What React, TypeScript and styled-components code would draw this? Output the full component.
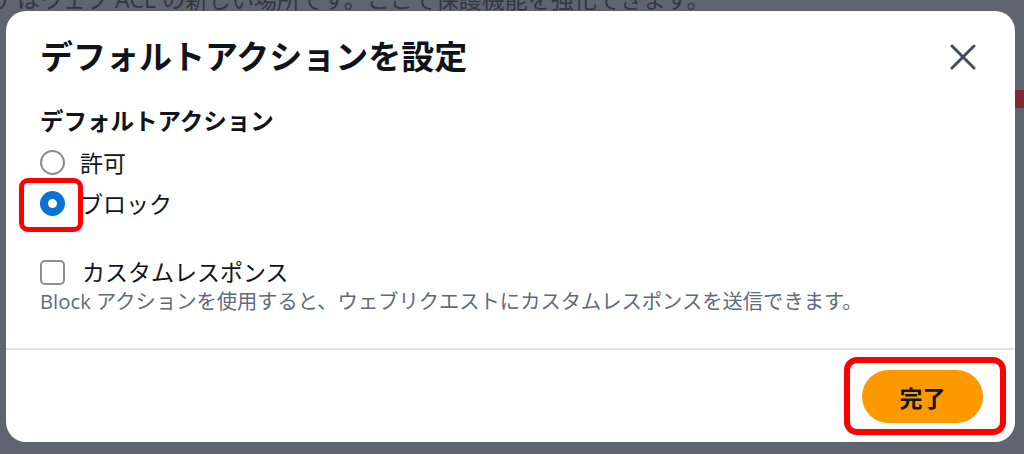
import React from 'react';
import styled, {createGlobalStyle} from "styled-components";

const GlobalStyle = createGlobalStyle`
html, body {
margin: 0;
padding: 0;
width: 1024px;
height: 454px;
overflow: hidden;
background: #5f6570;
font-family: "Open Sans", "Noto Sans CJK JP", sans-serif;
}
`;

export default function App() {
    return (
        <>
            <GlobalStyle/>
            <Page>
                <BackgroundText>アはウェブ ACL の新しい場所です。ここで保護機能を強化できます。</BackgroundText>
                <BackgroundTable>
                    <TableColumn/>
                    <TableColumn/>
                    <TableColumn/>
                    <TableColumn highlighted/>
                </BackgroundTable>
                <Modal role="dialog" aria-label="デフォルトアクションを設定">
                    <Header>
                        <Title>デフォルトアクションを設定</Title>
                        <CloseButton aria-label="閉じる">
                            <svg width="26" height="26" viewBox="0 0 26 26" fill="none">
                                <path d="M2 2 L24 24 M24 2 L2 24" stroke="#414d5c" strokeWidth="3" strokeLinecap="round"/>
                            </svg>
                        </CloseButton>
                    </Header>
                    <Body>
                        <FieldLabel>デフォルトアクション</FieldLabel>
                        <RadioGroup>
                            <Option>
                                <ControlSlot>
                                    <RadioCircle/>
                                </ControlSlot>
                                <OptionText>許可</OptionText>
                            </Option>
                            <Option>
                                <ControlSlot>
                                    <RadioCircle checked/>
                                    <Highlight style={{left: -21, top: -13, width: 64, height: 54}}/>
                                </ControlSlot>
                                <OptionText>ブロック</OptionText>
                            </Option>
                        </RadioGroup>
                        <CheckboxRow>
                            <CheckboxBox/>
                            <OptionText>カスタムレスポンス</OptionText>
                        </CheckboxRow>
                        <Description>Block アクションを使用すると、ウェブリクエストにカスタムレスポンスを送信できます。</Description>
                    </Body>
                    <Footer>
                        <PrimaryButton>
                            完了
                            <Highlight thick style={{left: -18, top: -13, width: 162, height: 78}}/>
                        </PrimaryButton>
                    </Footer>
                </Modal>
            </Page>
        </>
    );
}

const Page = styled.div`
position: relative;
width: 1024px;
height: 454px;
overflow: hidden;
`;

const BackgroundText = styled.div`
margin: -16px 0 0 -6px;
font-size: 23px;
line-height: 30px;
color: #33373e;
white-space: nowrap;
`;

const BackgroundTable = styled.div`
display: flex;
justify-content: flex-end;
height: 424px;
`;

const TableColumn = styled.div<{highlighted?: boolean}>`
width: 44px;
border-left: 1px solid #555b64;
background: ${props => props.highlighted ? 'linear-gradient(to bottom, transparent 76px, #7d2a33 76px, #7d2a33 94px, transparent 94px)' : 'transparent'};
`;

const Modal = styled.div`
position: absolute;
left: 6px;
top: 11px;
width: 1009px;
height: 431px;
box-sizing: border-box;
background: #ffffff;
border-radius: 20px;
display: flex;
flex-direction: column;
color: #0f141a;
`;

const Header = styled.div`
display: flex;
align-items: center;
justify-content: space-between;
padding: 24px 39px 0 34px;
`;

const Title = styled.h2`
margin: 0;
font-size: 33px;
line-height: 44px;
font-weight: 700;
`;

const CloseButton = styled.button`
border: none;
background: none;
padding: 0;
width: 26px;
height: 26px;
display: flex;
cursor: pointer;
`;

const Body = styled.div`
flex: 1;
padding: 27px 34px 0 34px;
display: flex;
flex-direction: column;
`;

const FieldLabel = styled.div`
font-size: 23.5px;
line-height: 30px;
font-weight: 700;
margin-bottom: 6px;
`;

const RadioGroup = styled.div`
display: flex;
flex-direction: column;
`;

const Option = styled.label`
display: flex;
align-items: center;
gap: 15px;
height: 41px;
`;

const ControlSlot = styled.span`
position: relative;
display: flex;
width: 25px;
height: 25px;
flex-shrink: 0;
`;

const RadioCircle = styled.span<{checked?: boolean}>`
box-sizing: border-box;
width: 25px;
height: 25px;
border-radius: 50%;
border: ${props => props.checked ? '8px solid #0972d3' : '2px solid #8c8c94'};
background: #ffffff;
`;

const OptionText = styled.span`
font-size: 23px;
line-height: 30px;
color: #0f141a;
`;

const CheckboxRow = styled.label`
display: flex;
align-items: center;
gap: 17px;
height: 32px;
margin-top: 32px;
`;

const CheckboxBox = styled.span`
box-sizing: border-box;
width: 25px;
height: 25px;
border: 2px solid #8c8c94;
border-radius: 5px;
flex-shrink: 0;
`;

const Description = styled.div`
font-size: 20.3px;
line-height: 26px;
color: #5f6b7a;
`;

const Footer = styled.div`
display: flex;
justify-content: flex-end;
border-top: 2px solid #e0e2e6;
padding: 20px 32px 19px 32px;
`;

const PrimaryButton = styled.button`
position: relative;
width: 121px;
height: 53px;
border: none;
border-radius: 27px;
background: #ff9900;
color: #0f141a;
font-family: "Open Sans", "Noto Sans CJK JP", sans-serif;
font-size: 23px;
font-weight: 700;
cursor: pointer;
`;

const Highlight = styled.span<{thick?: boolean}>`
position: absolute;
box-sizing: border-box;
border: ${props => props.thick ? 6 : 5}px solid #ff0000;
border-radius: ${props => props.thick ? 13 : 9}px;
pointer-events: none;
`;
